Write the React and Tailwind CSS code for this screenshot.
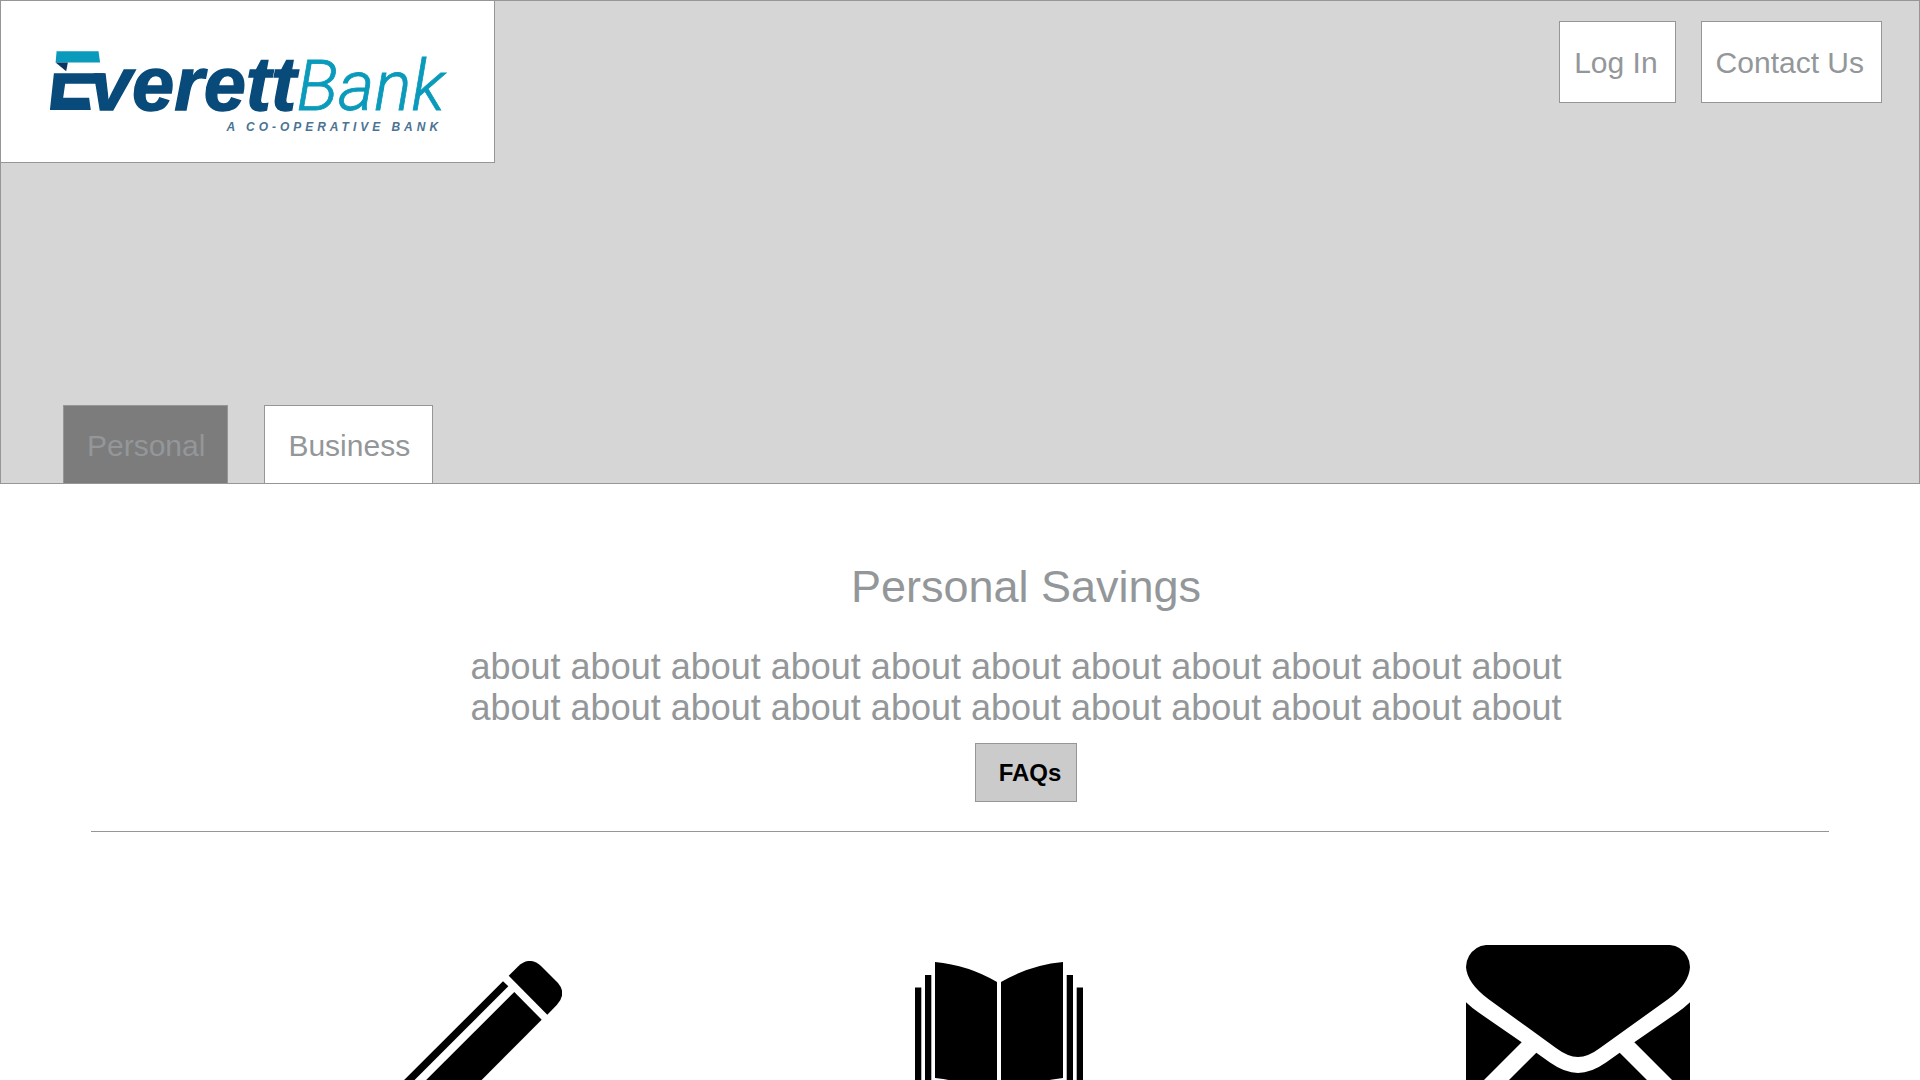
import React, { useState } from 'react';

const tabs = ['Personal', 'Business'];

function Logo() {
  return (
    <svg viewBox="0 0 494 161" className="block w-full" role="img" aria-label="Everett Bank, a co-operative bank">
      <text
        x="89"
        y="109"
        fontSize="76"
        className="font-['Liberation_Sans',sans-serif] font-bold italic"
        fill="#084a79"
        stroke="#084a79"
        strokeWidth="1.4"
      >
        verett
      </text>
      <text
        x="296"
        y="109"
        fontSize="70"
        className="font-[Roboto,sans-serif] font-light italic"
        fill="#0a9abb"
        stroke="#0a9abb"
        strokeWidth="0.8"
      >
        Bank
      </text>
      <text
        x="226"
        y="130"
        fontSize="12"
        className="font-['Liberation_Sans',sans-serif] font-bold italic tracking-[4px]"
        fill="#4a7394"
      >
        A CO-OPERATIVE BANK
      </text>
      {/* folded ribbon mark, it runs into the arm of the v */}
      <polygon points="84,62 110,62 110,72.3 84,72.3" fill="#fff" />
      <polygon points="55.7,50.3 97.7,50.3 99.3,61.7 54.7,61.7" fill="#0a9abb" />
      <polygon points="54.7,61.7 67,61.7 65.3,70.5" fill="#0b3560" />
      <polygon
        points="53,72.3 102.5,72.3 105.5,83 64.3,83 62.3,97 88.3,97 90,109.3 49,109.3"
        fill="#084a79"
      />
    </svg>
  );
}

function PencilIcon() {
  return (
    <svg viewBox="0 0 224 224" className="mt-4 h-56 w-56" aria-hidden="true">
      <path d="M170.7 14.7L180 5.4Q191.5 -5.4 203 5L220 22Q229 32.5 219 43.7L209.3 53.7Z" />
      <polygon points="165,20.3 170.3,25.3 25.3,170.3 18,167" />
      <polygon points="176.3,31 203.7,58.7 59,204 31,176" />
      <polygon points="14,171 53,210 0,224" />
    </svg>
  );
}

function BookIcon() {
  return (
    <svg viewBox="0 0 168 224" className="mt-4 mr-[30px] h-56 w-[168px]" aria-hidden="true">
      <rect x="0" y="26.5" width="6.3" height="140" />
      <rect x="10" y="14" width="6.3" height="140" />
      <path d="M20 1Q53 4 82 21V138Q53 120 20 117Z" />
      <path d="M148 1Q115 4 86 21V138Q115 120 148 117Z" />
      <rect x="151.7" y="14" width="6.3" height="140" />
      <rect x="161.7" y="26.5" width="6.3" height="140" />
    </svg>
  );
}

function EnvelopeIcon() {
  return (
    <svg viewBox="0 0 224 224" className="h-56 w-56" aria-hidden="true">
      <path d="M20 0H204Q215 1 221 11Q224 16 224 22Q223 39 202.3 54L134 103Q122 112 112 112Q102 112 90 103L22.3 54Q1 38 0 22Q0 16 3 11Q9 1 20 0Z" />
      <path d="M0 57.3Q6 63 12.3 67.3L55.7 97.3L0 153Z" />
      <path d="M224 57.3Q218 63 211.7 67.3L168.3 97.3L224 153Z" />
      <path d="M70.3 107.7L84 117.5Q99 128 112 128Q125 128 140 117.5L153.7 107.7L224 178V224H0V178Z" />
    </svg>
  );
}

function App() {
  const [activeTab, setActiveTab] = useState('Personal');

  return (
    <div className="min-h-screen bg-white font-['Liberation_Sans',Arial,sans-serif] text-[#939799]">
      <header className="flex min-h-[484px] flex-col justify-between border border-[#939799] bg-[#d6d6d6]">
        <div className="flex items-start justify-between">
          <a href="#" className="w-[494px] border-r border-b border-[#939799] bg-white">
            <Logo />
          </a>
          <div className="mt-5 mr-[37px] flex gap-[25px] text-[30px]">
            <button className="h-[82px] border border-[#939799] bg-white pr-[17px] pl-[14px]">Log In</button>
            <button className="h-[82px] border border-[#939799] bg-white pr-[17px] pl-[14px]">Contact Us</button>
          </div>
        </div>
        <nav className="ml-[62px] flex gap-9 text-[30px]">
          {tabs.map((tab) => (
            <button
              key={tab}
              onClick={() => setActiveTab(tab)}
              className={`h-[78px] border border-b-0 border-[#939799] pt-0.5 pr-[22px] pl-[23px] ${
                activeTab === tab ? 'bg-[#7c7c7c]' : 'bg-white'
              }`}
            >
              {tab}
            </button>
          ))}
        </nav>
      </header>

      <main>
        <section className="flex flex-col items-center pt-[78px] pl-[132px] text-center">
          <h1 className="text-[45px] leading-[50px]">Personal Savings</h1>
          <p className="mt-[34px] mr-5 max-w-[1110px] text-[36px] leading-[41px]">
            about about about about about about about about about about about
            about about about about about about about about about about about
          </p>
          <button className="mt-[15px] h-[59px] border border-[#939799] bg-[#cbcbcb] pr-[15px] pl-[23px] text-[24px] font-bold text-black">
            FAQs
          </button>
        </section>

        <hr className="mx-[91px] mt-[29px] border-[#939799]" />

        <section className="flex items-start justify-between pt-[113px] pr-[230px] pl-[338px]">
          <PencilIcon />
          <BookIcon />
          <EnvelopeIcon />
        </section>
      </main>
    </div>
  );
}

export default App;
